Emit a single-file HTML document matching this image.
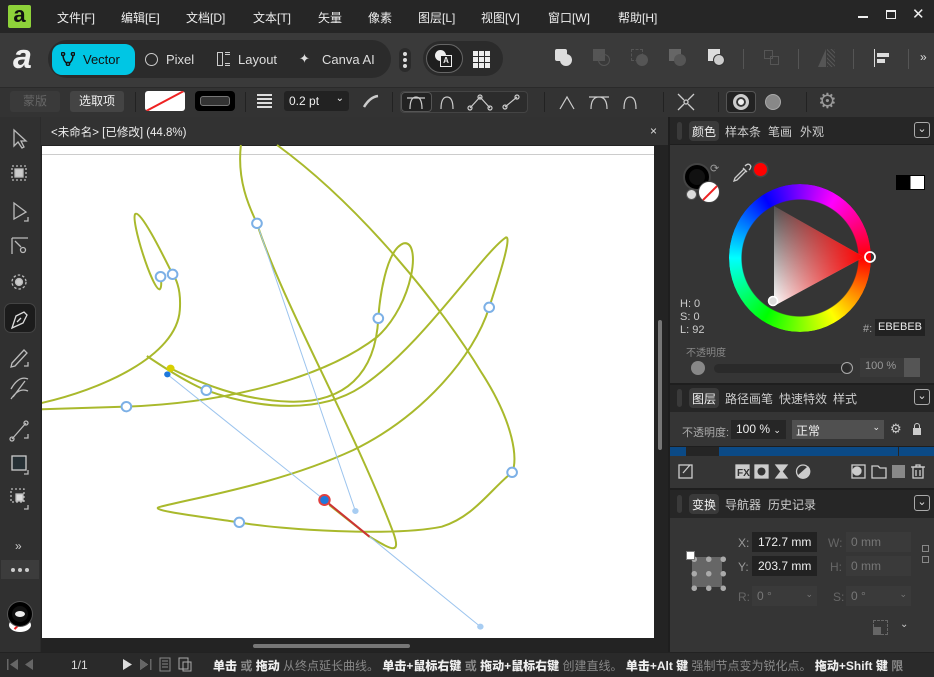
<!DOCTYPE html>
<html><head><meta charset="utf-8">
<style>
*{margin:0;padding:0;box-sizing:border-box}
body{width:934px;height:677px;overflow:hidden;background:#2b2b2b;font-family:"Liberation Sans","Noto Sans CJK SC",sans-serif;color:#ddd;position:relative}
.a{position:absolute}
.t{font-size:12px;white-space:nowrap}
.mi{position:absolute;top:9px;font-size:12px;color:#eee}
.sep{position:absolute;width:1px;background:#555}
.ic{position:absolute}
</style></head><body>
<!-- menu bar -->
<div class="a" style="left:0;top:0;width:934px;height:33px;background:#262626"></div>
<div class="a" style="left:8px;top:5px;width:23px;height:23px;background:#8ed23a;border-radius:2px;color:#111;font:bold 22px/20px 'Liberation Sans';text-align:center">a</div>
<div class="mi" style="left:57px">文件[F]</div>
<div class="mi" style="left:121px">编辑[E]</div>
<div class="mi" style="left:186px">文档[D]</div>
<div class="mi" style="left:253px">文本[T]</div>
<div class="mi" style="left:318px">矢量</div>
<div class="mi" style="left:368px">像素</div>
<div class="mi" style="left:418px">图层[L]</div>
<div class="mi" style="left:481px">视图[V]</div>
<div class="mi" style="left:548px">窗口[W]</div>
<div class="mi" style="left:618px">帮助[H]</div>
<div class="a" style="left:858px;top:16px;width:10px;height:2px;background:#eee"></div>
<div class="a" style="left:886px;top:10px;width:10px;height:9px;border:1.5px solid #eee;border-top-width:2.5px"></div>
<div class="a t" style="left:912px;top:5px;font-size:15px;color:#eee">✕</div>

<!-- toolbar 2 -->
<div class="a" style="left:0;top:33px;width:934px;height:54px;background:#3a3a3a"></div>
<div class="a" style="left:13px;top:40px;font:bold italic 34px/34px 'Liberation Sans';color:#eee">a</div>
<div class="a" style="left:48px;top:40px;width:343px;height:38px;background:#2b2b2b;border-radius:19px"></div>
<div class="a" style="left:52px;top:44px;width:83px;height:31px;background:#00c6e4;border-radius:10px"></div>
<svg class="ic" style="left:61px;top:52px" width="14" height="14" viewBox="0 0 14 14" fill="none" stroke="#111" stroke-width="1.5"><circle cx="2" cy="2" r="1.6"/><circle cx="12" cy="2" r="1.6"/><circle cx="7" cy="12" r="1.6"/><path d="M2 4 Q3 10 6 11 M12 4 Q11 10 8 11"/></svg>
<div class="a t" style="left:83px;top:52px;font-size:13px;color:#111">Vector</div>
<div class="a" style="left:145px;top:53px;width:13px;height:13px;border:1.5px solid #ccc;border-radius:50%"></div>
<div class="a t" style="left:166px;top:52px;font-size:13px;color:#ddd">Pixel</div>
<div class="a" style="left:217px;top:52px;width:6px;height:14px;border:1.5px solid #ccc"></div>
<div class="a" style="left:225px;top:52px;width:5px;height:14px;border-top:3px double #ccc;border-bottom:3px double #ccc"></div>
<div class="a t" style="left:238px;top:52px;font-size:13px;color:#ddd">Layout</div>
<div class="a t" style="left:299px;top:51px;font-size:13px;color:#ddd">✦</div>
<div class="a t" style="left:322px;top:52px;font-size:13px;color:#ddd">Canva AI</div>
<div class="a" style="left:399px;top:48px;width:12px;height:24px;background:#2b2b2b;border-radius:6px"></div>
<div class="a" style="left:403px;top:52px;width:4px;height:4px;background:#ddd;border-radius:50%;box-shadow:0 6px 0 #ddd,0 12px 0 #ddd"></div>
<div class="a" style="left:423px;top:41px;width:80px;height:35px;background:#2b2b2b;border-radius:18px"></div>
<div class="a" style="left:426px;top:44px;width:37px;height:29px;border:1.5px solid #666;border-radius:15px;background:#1e1e1e"></div>
<div class="a" style="left:435px;top:50px;width:11px;height:11px;background:#eee;border-radius:50%"></div>
<div class="a" style="left:440px;top:55px;width:12px;height:12px;border:1px solid #eee;background:#1e1e1e;font:bold 8px/10px 'Liberation Sans';text-align:center;color:#eee">A</div>
<div class="a" style="left:473px;top:51px;width:17px;height:17px;background:repeating-linear-gradient(90deg,#eee 0 5px,transparent 5px 6px),#2b2b2b;-webkit-mask:repeating-linear-gradient(0deg,#000 0 5px,transparent 5px 6px)"></div>
<div class="a" style="left:555px;top:49px;width:12px;height:12px;background:#ddd;border-radius:2px"></div><div class="a" style="left:560px;top:54px;width:12px;height:12px;background:#ddd;border-radius:50%"></div>
<div class="a" style="left:593px;top:49px;width:12px;height:12px;background:#555"></div><div class="a" style="left:598px;top:54px;width:12px;height:12px;border:1px solid #555;border-radius:50%"></div>
<div class="a" style="left:631px;top:49px;width:12px;height:12px;border:1px dashed #555"></div><div class="a" style="left:636px;top:54px;width:12px;height:12px;background:#555;border-radius:50%"></div>
<div class="a" style="left:669px;top:49px;width:12px;height:12px;background:#666"></div><div class="a" style="left:674px;top:54px;width:12px;height:12px;background:#555;border-radius:50%"></div>
<div class="a" style="left:708px;top:49px;width:12px;height:12px;background:#ddd"></div><div class="a" style="left:713px;top:54px;width:12px;height:12px;background:#ccc;border:1.5px solid #333;border-radius:50%"></div>
<div class="sep" style="left:743px;top:49px;height:20px"></div>
<div class="a" style="left:764px;top:50px;width:9px;height:9px;border:1px solid #555"></div><div class="a" style="left:770px;top:56px;width:9px;height:9px;border:1px solid #555"></div>
<div class="sep" style="left:798px;top:49px;height:20px"></div>
<div class="a" style="left:818px;top:49px;width:0;height:0;border-left:8px solid transparent;border-bottom:18px solid #555"></div><div class="a" style="left:827px;top:49px;width:8px;height:18px;background:repeating-linear-gradient(45deg,#555 0 1px,transparent 1px 3px)"></div>
<div class="sep" style="left:853px;top:49px;height:20px"></div>
<div class="a" style="left:874px;top:49px;width:1px;height:18px;background:#ddd"></div><div class="a" style="left:877px;top:53px;width:12px;height:4px;background:#ddd"></div><div class="a" style="left:877px;top:59px;width:8px;height:4px;background:#ddd"></div>
<div class="sep" style="left:908px;top:49px;height:20px"></div>
<div class="a t" style="left:920px;top:50px;color:#ddd">»</div>

<!-- context toolbar -->
<div class="a" style="left:0;top:87px;width:934px;height:30px;background:#333;border-top:1px solid #2a2a2a"></div>
<div class="a t" style="left:10px;top:91px;width:50px;height:21px;background:#3a3a3a;border-radius:3px;color:#666;text-align:center;line-height:21px">蒙版</div>
<div class="a t" style="left:70px;top:91px;width:54px;height:21px;background:#444;border-radius:3px;color:#eee;text-align:center;line-height:21px">选取项</div>
<div class="sep" style="left:135px;top:92px;height:20px;background:#222"></div>
<div class="a" style="left:145px;top:91px;width:40px;height:20px;background:#fff;border-radius:3px;overflow:hidden"><div class="a" style="left:-3px;top:9px;width:46px;height:1.5px;background:#e22;transform:rotate(-28deg)"></div></div>
<div class="a" style="left:195px;top:91px;width:40px;height:20px;background:#000;border-radius:4px"><div class="a" style="left:5px;top:5px;width:30px;height:10px;border:1.5px solid #777;border-radius:3px;background:#333"></div></div>
<div class="sep" style="left:245px;top:92px;height:20px;background:#222"></div>
<div class="a" style="left:257px;top:94px;width:15px;height:16px;background:repeating-linear-gradient(#ddd 0 2px,transparent 2px 4px)"></div>
<div class="a t" style="left:284px;top:91px;width:65px;height:20px;background:#222;border-radius:3px;color:#eee;padding:3px 0 0 5px">0.2 pt<span style="position:absolute;right:5px;top:2px;font-size:10px">⌄</span></div>
<svg class="ic" style="left:362px;top:93px" width="18" height="16"><path d="M2 14 Q8 4 16 3" stroke="#ccc" stroke-width="2.5" fill="none"/></svg>
<div class="sep" style="left:392px;top:92px;height:20px;background:#222"></div>
<div class="a" style="left:400px;top:91px;width:128px;height:22px;border:1px solid #444;border-radius:4px;background:#2c2c2c"></div>
<div class="a" style="left:401px;top:92px;width:31px;height:20px;border:1px solid #555;border-radius:4px;background:#222"></div>
<svg class="ic" style="left:400px;top:91px" width="130" height="22" fill="none" stroke="#ccc" stroke-width="1.2"><path d="M10 18 Q10 6 16 6 Q22 6 22 18 M7 7h18"/><path d="M41 18 Q41 6 47 6 Q53 6 53 18"/><path d="M70 17 L80 6 L90 17"/><circle cx="70" cy="17" r="2"/><circle cx="80" cy="6" r="2"/><circle cx="90" cy="17" r="2"/><path d="M105 16 L117 6"/><circle cx="105" cy="16" r="2"/><circle cx="117" cy="6" r="2"/></svg>
<div class="sep" style="left:544px;top:92px;height:20px;background:#222"></div>
<svg class="ic" style="left:555px;top:91px" width="90" height="22" fill="none" stroke="#ccc" stroke-width="1.2"><path d="M5 18 L12 6 L19 18"/><path d="M36 18 Q36 6 44 6 Q52 6 52 18 M34 6h20"/><path d="M69 18 Q69 6 75 6 Q81 6 81 18"/></svg>
<div class="sep" style="left:663px;top:92px;height:20px;background:#222"></div>
<svg class="ic" style="left:675px;top:91px" width="22" height="22" fill="none" stroke="#ccc" stroke-width="1.3"><path d="M3 3 L9 9 M19 3 L13 9 M3 19 L9 13 M19 19 L13 13"/><circle cx="11" cy="11" r="2"/></svg>
<div class="sep" style="left:718px;top:92px;height:20px;background:#222"></div>
<div class="a" style="left:726px;top:91px;width:30px;height:22px;background:#222;border:1px solid #555;border-radius:4px"></div>
<div class="a" style="left:733px;top:94px;width:16px;height:16px;border-radius:50%;background:#eee;border:3px solid #ccc;box-shadow:inset 0 0 0 2px #333"></div>
<div class="a" style="left:765px;top:94px;width:16px;height:16px;border-radius:50%;background:#888;border:1px solid #aaa"></div>
<div class="sep" style="left:806px;top:92px;height:20px;background:#222"></div>
<div class="a t" style="left:818px;top:89px;font-size:21px;color:#999">⚙</div>

<!-- left toolbar -->
<div class="a" style="left:0;top:117px;width:40px;height:535px;background:#303030"></div>
<div class="a" style="left:4px;top:303px;width:32px;height:30px;background:#1c1c1c;border-radius:7px;border:1px solid #444"></div>
<svg class="ic" style="left:0;top:117px" width="40" height="420" fill="none" stroke="#bbb" stroke-width="1.3">
<path d="M14 13 L14 29 L18 25 L22 31 L24 30 L21 24 L26 24 Z"/>
<rect x="12" y="49" width="14" height="14" stroke-dasharray="2 2"/><rect x="15" y="52" width="8" height="8" fill="#ccc"/>
<path d="M14 86 L14 102 L26 95 Z"/><path d="M28 100 V104 H24"/>
<path d="M12 121 V137 M12 121 H28 M15 124 L21 130"/><circle cx="23" cy="133" r="2.5"/>
<circle cx="19" cy="165" r="7" stroke-dasharray="2.5 2"/><circle cx="19" cy="165" r="3.5" fill="#ccc"/>
<path d="M12 211 L16 199 L24 195 L27 198 L23 206 L12 211 Z M17 205 L21 201" stroke="#ddd"/>
<path d="M12 246 L24 233 L27 236 L15 249 L11 250 Z"/><path d="M28 245 V249 H24"/>
<path d="M11 272 Q19 258 28 262 M11 282 Q19 270 28 274 M13 280 L25 264"/>
<path d="M12 322 L26 306"/><circle cx="26" cy="306" r="2"/><circle cx="12" cy="322" r="2"/><path d="M28 317 V321 H24"/>
<rect x="12" y="339" width="14" height="14" fill="#263035" stroke="#ccc"/><path d="M28 353 V357 H24"/>
<rect x="11" y="372" width="13" height="13" stroke-dasharray="2 2"/><rect x="16" y="377" width="7" height="7" fill="#ddd"/><path d="M28 388 V392 H24"/>
</svg>
<div class="a t" style="left:15px;top:539px;color:#ccc">»</div>
<div class="a" style="left:1px;top:560px;width:38px;height:19px;background:#3c3c3c"></div>
<div class="a" style="left:11px;top:568px;width:4px;height:4px;border-radius:50%;background:#ccc;box-shadow:7px 0 #ccc,14px 0 #ccc"></div>
<div class="a" style="left:9px;top:618px;width:22px;height:14px;border-radius:50%;background:#fff"></div>
<div class="a" style="left:13px;top:625px;width:9px;height:1.5px;background:#e22;transform:rotate(-45deg)"></div>
<div class="a" style="left:8px;top:602px;width:24px;height:24px;border-radius:50%;background:#111;border:4px solid #000;box-shadow:0 0 0 1px #555"></div>
<div class="a" style="left:15px;top:611px;width:10px;height:6px;border-radius:50%;background:#eee"></div>

<!-- document tab -->
<div class="a" style="left:41px;top:117px;width:627px;height:28px;background:#323232"></div>
<div class="a t" style="left:51px;top:124px;font-size:11.5px;color:#eee">&lt;未命名&gt; [已修改] (44.8%)</div>
<div class="a t" style="left:650px;top:124px;color:#ddd">×</div>
<!-- canvas -->
<div class="a" style="left:41px;top:145px;width:627px;height:507px;background:#232323"></div>
<div class="a" style="left:42px;top:146px;width:612px;height:492px;background:#fff"></div>
<div class="a" style="left:42px;top:154px;width:612px;height:1px;background:#ccc"></div>
<div class="a" style="left:658px;top:320px;width:4px;height:130px;background:#777;border-radius:2px"></div>
<div class="a" style="left:253px;top:644px;width:157px;height:4px;background:#777;border-radius:2px"></div>
<svg class="a" style="left:40px;top:140px" width="630" height="510" viewBox="0 0 1568 1530" preserveAspectRatio="none">
<defs><clipPath id="cp"><rect x="5" y="12" width="1523" height="1483"/></clipPath></defs>
<g clip-path="url(#cp)" fill="none" stroke="#a9b92c" stroke-width="2" vector-effect="non-scaling-stroke">
<path vector-effect="non-scaling-stroke" d="M500,15 C490,120 520,200 540,250 C600,480 780,860 880,1180 C900,1250 870,1225 820,1190 L720,1095"/>
<path vector-effect="non-scaling-stroke" d="M590,15 C800,200 1000,500 1100,700 C1180,850 1190,960 1175,997 C1120,1050 1080,1130 1000,1160 C880,1190 600,1170 496,1147 C400,1130 260,1110 300,1100 C400,1070 600,1030 780,930 C950,830 1080,650 1118,502 C1140,420 1175,290 1160,292 C1100,340 950,620 800,740 C700,820 550,810 414,751 C380,735 330,700 266,648"/>
<path vector-effect="non-scaling-stroke" d="M0,808 L215,800 C450,790 700,720 840,590 C930,490 950,300 905,310 C860,330 845,480 842,535 C835,700 760,790 620,785 C500,780 400,730 325,685"/>
<path vector-effect="non-scaling-stroke" d="M0,790 C150,750 340,650 348,510 C352,440 335,410 330,403 C300,330 250,210 237,222 C225,240 280,450 298,448 C305,440 300,410 300,410"/>
</g>
<g stroke="#9cc4ee" stroke-width="1" vector-effect="non-scaling-stroke" fill="none">
<path vector-effect="non-scaling-stroke" d="M317,703 L708,1080 L1096,1460 M540,250 L785,1113"/>
</g>
<path d="M708,1080 L820,1190" stroke="#c33" stroke-width="2" vector-effect="non-scaling-stroke"/>
<g fill="#fff" stroke="#7cb0e6" stroke-width="2">
<ellipse vector-effect="non-scaling-stroke" cx="540" cy="250" rx="12" ry="14"/>
<ellipse vector-effect="non-scaling-stroke" cx="300" cy="410" rx="12" ry="14"/>
<ellipse vector-effect="non-scaling-stroke" cx="330" cy="403" rx="12" ry="14"/>
<ellipse vector-effect="non-scaling-stroke" cx="842" cy="535" rx="12" ry="14"/>
<ellipse vector-effect="non-scaling-stroke" cx="1118" cy="502" rx="12" ry="14"/>
<ellipse vector-effect="non-scaling-stroke" cx="414" cy="751" rx="12" ry="14"/>
<ellipse vector-effect="non-scaling-stroke" cx="215" cy="800" rx="12" ry="14"/>
<ellipse vector-effect="non-scaling-stroke" cx="1175" cy="997" rx="12" ry="14"/>
<ellipse vector-effect="non-scaling-stroke" cx="496" cy="1147" rx="12" ry="14"/>
</g>
<ellipse cx="708" cy="1080" rx="13" ry="15" fill="#1e78dc" stroke="#e04040" stroke-width="2" vector-effect="non-scaling-stroke"/>
<ellipse cx="325" cy="685" rx="10" ry="11" fill="#d8d000"/>
<ellipse cx="317" cy="703" rx="8" ry="9" fill="#1e78dc"/>
<ellipse cx="785" cy="1113" rx="8" ry="9" fill="#a8cdf2"/>
<ellipse cx="1096" cy="1460" rx="8" ry="9" fill="#a8cdf2"/>
</svg>

<!-- right panels -->
<div class="a" style="left:668px;top:117px;width:266px;height:535px;background:#1e1e1e"></div>
<!-- color -->
<div class="a" style="left:670px;top:117px;width:264px;height:27px;background:#262626"></div>
<div class="a" style="left:677px;top:122px;width:5px;height:18px;background:#3a3a3a;border-radius:3px"></div>
<div class="a t" style="left:689px;top:121px;width:30px;height:20px;background:#3a3a3a;border-radius:4px;color:#eee;padding:2px 0 0 3px">颜色</div>
<div class="a t" style="left:725px;top:123px;color:#ccc">样本条</div>
<div class="a t" style="left:768px;top:123px;color:#ccc">笔画</div>
<div class="a t" style="left:800px;top:123px;color:#ccc">外观</div>
<div class="a" style="left:914px;top:122px;width:16px;height:16px;border:1px solid #aaa;border-radius:3px;color:#ddd;font-size:11px;text-align:center;line-height:13px">⌄</div>
<div class="a" style="left:670px;top:145px;width:264px;height:238px;background:#353535"></div>
<div class="a" style="left:685px;top:165px;width:24px;height:24px;border-radius:50%;background:#111;border:4px solid #000;box-shadow:0 0 0 2px #444"></div>
<div class="a" style="left:698px;top:181px;width:22px;height:22px;border-radius:50%;background:#fff;border:1px solid #444;overflow:hidden"><div class="a" style="left:-2px;top:10px;width:26px;height:1.5px;background:#e22;transform:rotate(-45deg)"></div></div>
<div class="a" style="left:686px;top:189px;width:11px;height:11px;border-radius:50%;background:#ddd;border:1px solid #555"></div>
<div class="a t" style="left:710px;top:162px;color:#999;font-size:11px">⟳</div>
<svg class="ic" style="left:731px;top:162px" width="22" height="22" fill="none" stroke="#ccc" stroke-width="1.3"><path d="M3 19 L4 16 L13 7 L15 9 L6 18 Z M12 6 L16 10 M14 4 Q17 1 19 3 Q21 5 18 8"/></svg>
<div class="a" style="left:754px;top:163px;width:13px;height:13px;border-radius:50%;background:#f00;box-shadow:0 0 0 1.5px #444"></div>
<div class="a" style="left:896px;top:175px;width:29px;height:15px;background:linear-gradient(90deg,#000 50%,#fff 50%);border:1px solid #000"></div>
<div class="a" style="left:729px;top:184px;width:142px;height:148px;border-radius:50%;background:conic-gradient(#8000ff,#ff00ff 30deg,#ff0000 90deg,#ffff00 150deg,#00ff00 210deg,#00ffff 270deg,#0000ff 330deg,#8000ff);-webkit-mask:radial-gradient(circle,transparent 58px,#000 59px)"></div>
<svg class="a" style="left:668px;top:140px" width="266" height="240">
<defs><linearGradient id="g1" x1="106" y1="20" x2="106" y2="165" gradientUnits="userSpaceOnUse"><stop offset="0" stop-color="#000"/><stop offset="1" stop-color="#fff"/></linearGradient>
<linearGradient id="g2" x1="106" y1="0" x2="196" y2="0" gradientUnits="userSpaceOnUse"><stop offset="0" stop-color="#f00" stop-opacity="0"/><stop offset="1" stop-color="#f00"/></linearGradient></defs>
<polygon points="106,66 196,117 106,166" fill="url(#g1)"/><polygon points="106,66 196,117 106,166" fill="url(#g2)"/>
<circle cx="202" cy="117" r="5" fill="none" stroke="#fff" stroke-width="1.8"/>
<circle cx="105" cy="161" r="4.5" fill="#ddd" stroke="#fff" stroke-width="1.5"/>
</svg>
<div class="a" style="left:680px;top:298px;font-size:11px;color:#ccc;line-height:13px">H: 0<br>S: 0<br>L: 92</div>
<div class="a t" style="left:863px;top:323px;font-size:11px;color:#aaa">#:</div>
<div class="a t" style="left:875px;top:319px;width:50px;height:17px;background:#222;color:#eee;font-size:11px;padding:2px 0 0 3px">EBEBEB</div>
<div class="a t" style="left:686px;top:344px;font-size:10px;color:#888">不透明度</div>
<div class="a" style="left:691px;top:361px;width:14px;height:14px;border-radius:50%;background:#888"></div>
<div class="a" style="left:714px;top:364px;width:136px;height:9px;background:#2a2a2a;border-radius:5px"></div>
<div class="a" style="left:841px;top:362px;width:12px;height:12px;border-radius:50%;border:1.5px solid #aaa"></div>
<div class="a t" style="left:860px;top:358px;width:60px;height:19px;background:#3a3a3a;color:#999;padding:2px 0 0 5px;font-size:11px">100 %</div>
<div class="a" style="left:904px;top:358px;width:16px;height:19px;background:#555"></div>
<!-- layers -->
<div class="a" style="left:670px;top:385px;width:264px;height:27px;background:#262626"></div>
<div class="a" style="left:677px;top:389px;width:5px;height:18px;background:#3a3a3a;border-radius:3px"></div>
<div class="a t" style="left:689px;top:388px;width:30px;height:20px;background:#3a3a3a;border-radius:4px;color:#eee;padding:2px 0 0 3px">图层</div>
<div class="a t" style="left:725px;top:390px;color:#ccc">路径画笔</div>
<div class="a t" style="left:779px;top:390px;color:#ccc">快速特效</div>
<div class="a t" style="left:833px;top:390px;color:#ccc">样式</div>
<div class="a" style="left:914px;top:389px;width:16px;height:16px;border:1px solid #aaa;border-radius:3px;color:#ddd;font-size:11px;text-align:center;line-height:13px">⌄</div>
<div class="a" style="left:670px;top:412px;width:264px;height:34px;background:#353535"></div>
<div class="a t" style="left:682px;top:424px;font-size:11px;color:#aaa">不透明度:</div>
<div class="a t" style="left:731px;top:420px;width:55px;height:19px;background:#262626;color:#eee;padding:2px 0 0 5px">100 % <span style="font-size:9px">⌄</span></div>
<div class="a t" style="left:792px;top:420px;width:92px;height:19px;background:#505050;color:#eee;padding:2px 0 0 4px">正常<span style="position:absolute;right:4px;font-size:9px">⌄</span></div>
<div class="a t" style="left:890px;top:421px;color:#ccc;font-size:13px">⚙</div>
<div class="a" style="left:913px;top:428px;width:8px;height:7px;background:#ccc"></div><div class="a" style="left:914px;top:423px;width:6px;height:7px;border:1.5px solid #ccc;border-radius:3px 3px 0 0"></div>
<div class="a" style="left:670px;top:447px;width:264px;height:9px;background:#0b4a86"></div>
<div class="a" style="left:686px;top:447px;width:33px;height:9px;background:#252525"></div>
<div class="a" style="left:898px;top:447px;width:1px;height:9px;background:#252525"></div>
<div class="a" style="left:670px;top:456px;width:264px;height:32px;background:#353535"></div>
<svg class="a" style="left:670px;top:456px" width="264" height="32" fill="none" stroke="#ccc" stroke-width="1.3">
<rect x="9" y="9" width="13" height="13"/><path d="M13 17 L20 9"/>
<rect x="66" y="9" width="13" height="13" fill="#ccc"/><text x="67" y="20" font-size="10" font-weight="bold" fill="#333" stroke="none" font-family="Liberation Sans">FX</text>
<rect x="85" y="9" width="13" height="13" fill="#ccc"/><circle cx="91.5" cy="15.5" r="4" fill="#333" stroke="none"/>
<path d="M106 9 H117 L112 15.5 L117 22 H106 L111 15.5 Z" fill="#ccc"/>
<circle cx="133" cy="15.5" r="6.5"/><path d="M128 20 L138 11 A6.5 6.5 0 0 1 128 20 Z" fill="#ccc"/>
<rect x="182" y="9" width="13" height="13"/><circle cx="187" cy="15" r="4" fill="#ccc"/>
<path d="M202 10 H208 L210 12 H216 V22 H202 Z"/>
<rect x="222" y="9" width="13" height="13" fill="#888" stroke="none"/>
<rect x="243" y="11" width="10" height="11"/><path d="M241 11 H255 M246 11 V9 H250 V11 M246 14 V20 M250 14 V20"/>
</svg>
<!-- transform -->
<div class="a" style="left:670px;top:490px;width:264px;height:28px;background:#262626"></div>
<div class="a" style="left:677px;top:495px;width:5px;height:18px;background:#3a3a3a;border-radius:3px"></div>
<div class="a t" style="left:689px;top:494px;width:30px;height:20px;background:#3a3a3a;border-radius:4px;color:#eee;padding:2px 0 0 3px">变换</div>
<div class="a t" style="left:725px;top:496px;color:#ccc">导航器</div>
<div class="a t" style="left:768px;top:496px;color:#ccc">历史记录</div>
<div class="a" style="left:914px;top:495px;width:16px;height:16px;border:1px solid #aaa;border-radius:3px;color:#ddd;font-size:11px;text-align:center;line-height:13px">⌄</div>
<div class="a" style="left:670px;top:518px;width:264px;height:134px;background:#353535"></div>
<div class="a" style="left:692px;top:557px;width:30px;height:30px;background:#666"></div>
<div class="a" style="left:687px;top:552px;width:40px;height:40px;background:radial-gradient(circle,#aaa 2.5px,transparent 3px) 0 0/14.5px 14.5px"></div>
<div class="a" style="left:686px;top:551px;width:9px;height:9px;background:#fff;border:1px solid #777"></div>
<div class="a t" style="left:738px;top:536px;color:#999">X:</div>
<div class="a t" style="left:752px;top:532px;width:65px;height:20px;background:#222;color:#eee;padding:3px 0 0 6px">172.7 mm</div>
<div class="a t" style="left:738px;top:560px;color:#999">Y:</div>
<div class="a t" style="left:752px;top:556px;width:65px;height:20px;background:#222;color:#eee;padding:3px 0 0 6px">203.7 mm</div>
<div class="a t" style="left:828px;top:536px;color:#666">W:</div>
<div class="a t" style="left:846px;top:532px;width:65px;height:20px;background:#3a3a3a;color:#777;padding:3px 0 0 5px">0 mm</div>
<div class="a t" style="left:830px;top:560px;color:#666">H:</div>
<div class="a t" style="left:846px;top:556px;width:65px;height:20px;background:#3a3a3a;color:#777;padding:3px 0 0 5px">0 mm</div>
<div class="a" style="left:922px;top:545px;width:7px;height:7px;border:1.5px solid #888"></div><div class="a" style="left:922px;top:556px;width:7px;height:7px;border:1.5px solid #888"></div>
<div class="a t" style="left:738px;top:590px;color:#666">R:</div>
<div class="a t" style="left:752px;top:586px;width:65px;height:20px;background:#3a3a3a;color:#777;padding:3px 0 0 5px">0 °<span style="position:absolute;right:4px;font-size:9px">⌄</span></div>
<div class="a t" style="left:833px;top:590px;color:#666">S:</div>
<div class="a t" style="left:846px;top:586px;width:65px;height:20px;background:#3a3a3a;color:#777;padding:3px 0 0 5px">0 °<span style="position:absolute;right:4px;font-size:9px">⌄</span></div>
<div class="a" style="left:873px;top:620px;width:15px;height:15px;border:1px dashed #666"></div><div class="a" style="left:873px;top:627px;width:8px;height:8px;background:#666"></div>
<div class="a t" style="left:900px;top:619px;color:#ccc;font-size:10px">⌄</div>

<!-- status bar -->
<div class="a" style="left:0;top:652px;width:934px;height:25px;background:#2a2a2a;border-top:1px solid #222"></div>
<svg class="ic" style="left:5px;top:657px" width="200" height="16" fill="#666"><rect x="2" y="2" width="1.5" height="11"/><path d="M13 2 L5 7.5 L13 13Z M28 2 L20 7.5 L28 13Z"/><path d="M118 2 L127 7.5 L118 13Z M135 2 L143 7.5 L135 13Z" fill="#ddd"/><path d="M135 2 L143 7.5 L135 13Z"/><rect x="145" y="2" width="1.5" height="11"/><rect x="155" y="1" width="10" height="13" fill="none" stroke="#888"/><path d="M157 4h6M157 7h6M157 10h6" stroke="#888"/><rect x="174" y="1" width="9" height="11" fill="none" stroke="#aaa"/><rect x="178" y="5" width="8" height="9" fill="none" stroke="#aaa"/></svg>
<div class="a t" style="left:71px;top:658px;color:#ddd">1/1</div>
<div class="a t" style="left:213px;top:657px;color:#888;font-weight:bold"><b style="color:#eee">单击</b> 或 <b style="color:#eee">拖动</b> <span style="font-weight:normal">从终点延长曲线。</span> <b style="color:#eee">单击+鼠标右键</b> 或 <b style="color:#eee">拖动+鼠标右键</b> <span style="font-weight:normal">创建直线。</span> <b style="color:#eee">单击+Alt 键</b> <span style="font-weight:normal">强制节点变为锐化点。</span> <b style="color:#eee">拖动+Shift 键</b> 限</div>
</body></html>
